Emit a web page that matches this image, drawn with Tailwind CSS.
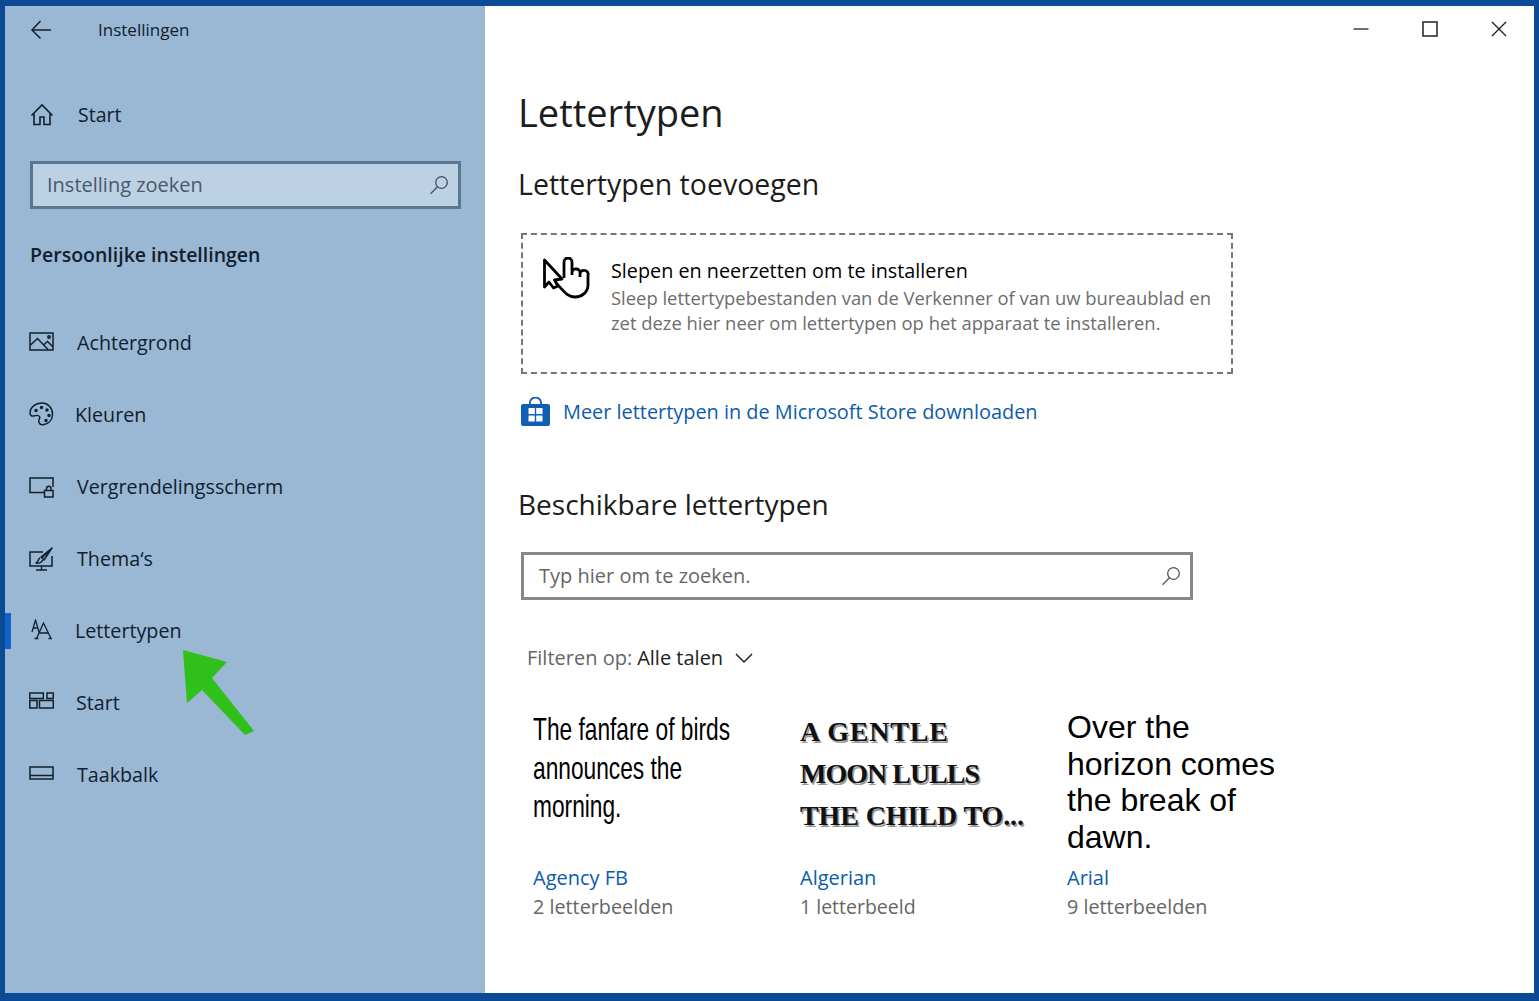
<!DOCTYPE html>
<html lang="nl">
<head>
    <meta charset="UTF-8">
    <meta name="viewport" content="width=device-width, initial-scale=1.0">
    <title>Lettertypen</title>
    <script src="https://cdn.jsdelivr.net/npm/@tailwindcss/browser@4"></script>
</head>
<body class="h-screen overflow-hidden bg-[#0b4a94] pt-[6px] pl-[5px] pr-[5px] pb-[8px] font-['Open_Sans',sans-serif]">
<div class="relative flex h-full">

    <!-- sidebar -->
    <aside class="w-[480px] shrink-0 bg-[#9ab7d3] text-[#11202f]">
        <div class="flex h-[48px] items-center pl-[25px]">
            <svg class="w-[24px] h-[24px]" viewBox="0 0 24 24" fill="none" stroke="#11202f" stroke-width="1.5"><path d="M2 12H21M10.5 3L2 12l8.500 8.500"/></svg>
            <span class="ml-[44px] text-[17px]">Instellingen</span>
        </div>
        <div class="mt-[37px] flex h-[48px] items-center pl-[25px]">
            <svg class="w-[24px] h-[24px]" viewBox="0 0 24 24" fill="none" stroke="#11202f" stroke-width="1.6"><path d="M1.500 12.500L12 2l10.500 10.500M4 10v11.500h6V14h4v7.500h6V10"/></svg>
            <span class="ml-[24px] text-[19.500px]">Start</span>
        </div>
        <div class="mt-[22px] ml-[25px] flex h-[48px] w-[431px] items-center justify-between border-[3px] border-[#5b7690] bg-[#bdd1e4] pl-[14px] pr-[9px]">
            <span class="text-[20px] text-[#47596b]">Instelling zoeken</span>
            <svg class="w-[20px] h-[20px]" viewBox="0 0 20 20" fill="none" stroke="#3f5264" stroke-width="1.3"><circle cx="12.500" cy="7.500" r="5.800"/><path d="M8.500 11.700L1.500 18.700"/></svg>
        </div>
        <h2 class="mt-[31px] ml-[25px] flex h-[30px] items-center text-[19.500px] font-semibold">Persoonlijke instellingen</h2>

        <nav class="mt-[37px] text-[19.700px]">
            <div class="flex h-[72px] items-center">
                <span class="w-[6px] h-[36px]"></span>
                <svg class="ml-[18px] w-[25px] h-[24px]" viewBox="0 0 25 24" fill="none" stroke="#11202f" stroke-width="1.500"><path d="M1 2h23v17H1zM1 14.500l7.500-7 11 11.500M15 13.500l3.500-3 5.500 5.500"/><circle cx="20" cy="6" r="1.200"/></svg>
                <span class="ml-[23px]">Achtergrond</span>
            </div>
            <div class="flex h-[72px] items-center">
                <span class="w-[6px] h-[36px]"></span>
                <svg class="ml-[18px] -mt-[3px] w-[25px] h-[24px]" viewBox="0 0 25 24" fill="none" stroke="#11202f" stroke-width="1.500"><path d="M13 1C6.500 1 1 5.500 1 11c0 2 1.500 3.500 3.500 3 2.500-.7 5-1.500 6 .5s-1.500 3.500-.5 6c.7 2 3 2.500 5 2 5-1 8.500-5 8.500-10.500C23.500 6 19 1 13 1z"/><circle cx="7" cy="8.500" r="1" fill="#11202f"/><circle cx="12.500" cy="5.500" r="1" fill="#11202f"/><circle cx="18" cy="8" r="1" fill="#11202f"/><circle cx="20" cy="13.500" r="1" fill="#11202f"/><circle cx="17" cy="18.500" r="1" fill="#11202f"/></svg>
                <span class="ml-[21px]">Kleuren</span>
            </div>
            <div class="flex h-[72px] items-center">
                <span class="w-[6px] h-[36px]"></span>
                <svg class="ml-[18px] w-[25px] h-[24px]" viewBox="0 0 25 24" fill="none" stroke="#11202f" stroke-width="1.500"><path d="M15 17.500H1V3h23v9M15.500 15.500h8.500v6.500h-8.500zM17.500 15.500v-2a2.200 2.200 0 0 1 4.500 0v2"/></svg>
                <span class="ml-[23px]">Vergrendelingsscherm</span>
            </div>
            <div class="flex h-[72px] items-center">
                <span class="w-[6px] h-[36px]"></span>
                <svg class="ml-[18px] w-[25px] h-[24px]" viewBox="0 0 25 24" fill="none" stroke="#11202f" stroke-width="1.500"><path d="M14 5H1v14h22V9M7 23h11M12.500 19v4"/><path d="M23 1L13 11M23 1l-8 12-3-3zM11 11c-2 1-1 3-4 5 3 .5 6-.5 6.500-3" stroke-linejoin="round"/></svg>
                <span class="ml-[23px]">Thema‘s</span>
            </div>
            <div class="flex h-[72px] items-center">
                <span class="w-[6px] h-[36px] bg-[#0f62c9]"></span>
                <svg class="ml-[18px] w-[25px] h-[24px]" viewBox="0 0 25 24" fill="none" stroke="#11202f" stroke-width="1.300"><path d="M3 13L6.500 1 10 13M4.200 9h4.600M7.500 19.500L14.500 4 22 19.500M9.500 14h10M5.500 19.500h4M19.500 19.500h3.500"/></svg>
                <span class="ml-[21px]">Lettertypen</span>
            </div>
            <div class="flex h-[72px] items-center">
                <span class="w-[6px] h-[36px]"></span>
                <svg class="ml-[18px] w-[25px] h-[24px]" viewBox="0 0 25 24" fill="none" stroke="#11202f" stroke-width="1.500"><path d="M.8 2h13.500v5.500H.8zM18 2h6.300v5.500H18zM.8 9.500H8V17H.8zM10.500 9.500h13.800V17H10.500z"/></svg>
                <span class="ml-[22px]">Start</span>
            </div>
            <div class="flex h-[72px] items-center">
                <span class="w-[6px] h-[36px]"></span>
                <svg class="ml-[18px] w-[25px] h-[24px]" viewBox="0 0 25 24" fill="none" stroke="#11202f" stroke-width="1.500"><path d="M1 4h23v12H1zM1 12.500h23"/></svg>
                <span class="ml-[23px]">Taakbalk</span>
            </div>
        </nav>
    </aside>

    <!-- content -->
    <main class="flex-1 bg-white pl-[33px] text-black">
        <div class="flex h-[48px] justify-end pr-[1px] pb-[2px]">
            <button class="flex w-[69px] items-center justify-center">
                <svg class="w-[16px] h-[16px]" viewBox="0 0 16 16" stroke="#222" stroke-width="1.300"><path d="M0.500 8h15"/></svg>
            </button>
            <button class="flex w-[69px] items-center justify-center">
                <svg class="w-[16px] h-[16px]" viewBox="0 0 16 16" fill="none" stroke="#222" stroke-width="1.500"><path d="M1 1h14v14H1z"/></svg>
            </button>
            <button class="flex w-[69px] items-center justify-center">
                <svg class="w-[16px] h-[16px]" viewBox="0 0 16 16" stroke="#222" stroke-width="1.400"><path d="M1 1l14 14M15 1L1 15"/></svg>
            </button>
        </div>

        <h1 class="mt-[28px] flex h-[60px] items-center text-[38px] text-[#1c1c1c]">Lettertypen</h1>
        <h2 class="mt-[22px] flex h-[40px] items-center text-[28.500px] text-[#1c1c1c]">Lettertypen toevoegen</h2>

        <div class="mt-[29px] ml-[3px] flex h-[141px] w-[712px] border-2 border-dashed border-[#777] pl-[20px] pt-[22px]">
            <svg class="w-[48px] h-[44px] shrink-0" viewBox="0 0 48 44" fill="none" stroke="#000" stroke-width="2.800" stroke-linejoin="round"><path d="M1.500 3V30L6 25l4.500 6 4.500-2-3.500-6 7.500-1z"/><path d="M21 21V5a4 4 0 0 1 8 0V18M29 15a4 3.500 0 0 1 8 1v4M37 16a4 3.500 0 0 1 8 2v10c0 7-6 12-13 12-8 0-12-7-19-14"/></svg>
            <div class="ml-[20px]">
                <div class="flex h-[28px] items-center text-[19.800px]">Slepen en neerzetten om te installeren</div>
                <div class="text-[18.400px] leading-[25px] text-[#6d6d6d]">
                    <div>Sleep lettertypebestanden van de Verkenner of van uw bureaublad en</div>
                    <div>zet deze hier neer om lettertypen op het apparaat te installeren.</div>
                </div>
            </div>
        </div>

        <div class="mt-[21px] ml-[3px] flex h-[34px] items-center">
            <svg class="w-[29px] h-[30px]" viewBox="0 0 29 30"><path d="M9 8V5.500a5.500 5 0 0 1 11 0V8" fill="none" stroke="#0f5fb5" stroke-width="1.800"/><rect y="7" width="29" height="22" rx="2" fill="#0f5fb5"/><path d="M7.500 11h6.300v6H7.500zM15.200 11h6.300v6h-6.300zM7.500 18.400h6.300v6H7.500zM15.200 18.400h6.300v6h-6.300z" fill="#fff"/></svg>
            <span class="ml-[13px] text-[19.900px] text-[#0b5cad]">Meer lettertypen in de Microsoft Store downloaden</span>
        </div>

        <h2 class="mt-[55px] flex h-[40px] items-center text-[28px] text-[#1c1c1c]">Beschikbare lettertypen</h2>

        <div class="mt-[28px] ml-[3px] flex h-[48px] w-[672px] items-center justify-between border-[3px] border-[#888] pl-[15px] pr-[9px]">
            <span class="text-[20px] text-[#666]">Typ hier om te zoeken.</span>
            <svg class="w-[20px] h-[20px]" viewBox="0 0 20 20" fill="none" stroke="#555" stroke-width="1.300"><circle cx="12.500" cy="7.500" r="5.800"/><path d="M8.500 11.700L1.500 18.700"/></svg>
        </div>

        <div class="mt-[43px] ml-[9px] flex h-[30px] items-center text-[20px]">
            <span class="text-[#666]">Filteren op:</span>
            <span class="ml-[5px] text-[#222]">Alle talen</span>
            <svg class="ml-[12px] w-[18px] h-[18px]" viewBox="0 0 18 18" fill="none" stroke="#222" stroke-width="1.500"><path d="M1 5l8 8 8-8"/></svg>
        </div>

        <div class="mt-[34px] ml-[15px] grid w-[801px] grid-cols-3">
            <div>
                <div class="h-[157px] whitespace-nowrap pt-[3px] font-['Liberation_Sans',sans-serif] text-[32px] leading-[38.500px] origin-left scale-x-[0.71]">
                    <div>The fanfare of birds</div>
                    <div>announces the</div>
                    <div>morning.</div>
                </div>
                <div class="flex h-[28px] items-center text-[20px] text-[#0b5cad]">Agency FB</div>
                <div class="flex h-[30px] items-center text-[19.800px] text-[#666]">2 letterbeelden</div>
            </div>
            <div>
                <div class="h-[157px] whitespace-nowrap pt-[4px] font-['Liberation_Serif',serif] text-[28px] font-bold leading-[42px] text-[#111] [text-shadow:1.500px_1.500px_0_#999]">
                    <div class="tracking-[0.8px]">A GENTLE</div>
                    <div class="tracking-[-1px]">MOON LULLS</div>
                    <div class="tracking-[-0.1px]">THE CHILD TO...</div>
                </div>
                <div class="flex h-[28px] items-center text-[20px] text-[#0b5cad]">Algerian</div>
                <div class="flex h-[30px] items-center text-[19.500px] text-[#666]">1 letterbeeld</div>
            </div>
            <div>
                <div class="h-[157px] whitespace-nowrap pt-[2px] font-['Liberation_Sans',sans-serif] text-[32px] leading-[36.700px]">
                    <div>Over the</div>
                    <div>horizon comes</div>
                    <div>the break of</div>
                    <div>dawn.</div>
                </div>
                <div class="flex h-[28px] items-center text-[20px] text-[#0b5cad]">Arial</div>
                <div class="flex h-[30px] items-center text-[19.800px] text-[#666]">9 letterbeelden</div>
            </div>
        </div>
    </main>

    <!-- annotation arrow -->
    <svg class="absolute left-[170px] top-[634px] w-[85px] h-[100px]" viewBox="0 0 85 100"><path d="M8 10L52 22 37 38 79 91 70 95 27 50 12 63z" fill="#2fc01a"/></svg>
</div>
</body>
</html>
